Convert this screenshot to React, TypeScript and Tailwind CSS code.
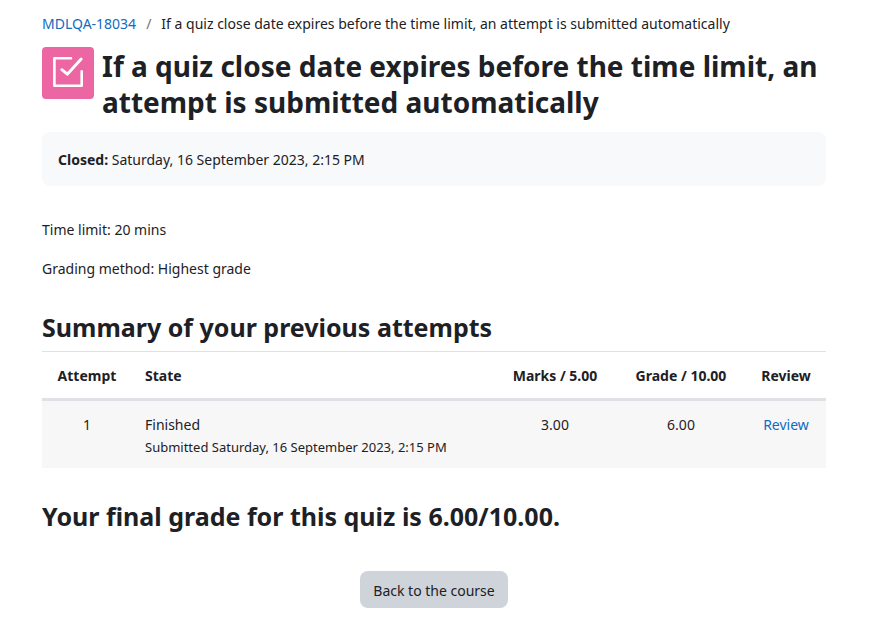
import React from "react";

const attempts = [
  {
    id: 1,
    state: "Finished",
    submitted: "Submitted Saturday, 16 September 2023, 2:15 PM",
    marks: "3.00",
    grade: "6.00",
  },
];

const QuizIcon: React.FC = () => {
  return (
    <svg viewBox="0 0 52 52" fill="none" stroke="white" strokeLinecap="round" strokeLinejoin="round" className="w-full h-full" aria-hidden="true">
      <path d="M29 11.3H12.4V38.7H39.7V24.2" strokeWidth="2.6" />
      <path d="M19.8 22.7L25.3 27.2L39.2 12" strokeWidth="2.9" />
    </svg>
  );
};

const App: React.FC = () => {
  return (
    <div className="min-h-screen bg-white pl-[42px] pr-[66px] pt-3 pb-2 font-['Noto_Sans',sans-serif] text-[14px] leading-[23px] text-[#1d2125]">
      <nav aria-label="Breadcrumb">
        <ol className="flex gap-2.5">
          <li>
            <a href="#course" className="text-[#0f6cbf] hover:underline">MDLQA-18034</a>
          </li>
          <li className="text-[#6a737b]" aria-hidden="true">/</li>
          <li>If a quiz close date expires before the time limit, an attempt is submitted automatically</li>
        </ol>
      </nav>

      <main>
        <header className="mt-3 flex items-start gap-2">
          <div className="size-[52px] shrink-0 rounded bg-[#eb66a2]">
            <QuizIcon />
          </div>
          <h1 className="pt-px text-[28px] leading-9 font-bold">
            If a quiz close date expires before the time limit, an attempt is submitted automatically
          </h1>
        </header>

        <div className="mt-3 rounded-lg bg-[#f8f9fa] px-4 pt-4 pb-[15px]">
          <strong className="font-bold">Closed:</strong> Saturday, 16 September 2023, 2:15 PM
        </div>

        <div className="mt-8 flex flex-col gap-4">
          <p>Time limit: 20 mins</p>
          <p>Grading method: Highest grade</p>
        </div>

        <h2 className="mt-[31px] text-[25px] leading-8 font-bold">Summary of your previous attempts</h2>

        <table className="mt-2 w-full border-collapse">
          <thead>
            <tr className="border-t border-b-3 border-t-[#dee2e6] border-b-[#dee2e6]">
              <th scope="col" className="w-[90px] pt-3 pb-[11px] text-center font-bold">Attempt</th>
              <th scope="col" className="px-[13px] pt-3 pb-[11px] text-left font-bold">State</th>
              <th scope="col" className="w-[122px] pt-3 pb-[11px] text-center font-bold">Marks / 5.00</th>
              <th scope="col" className="w-[130px] pt-3 pb-[11px] text-center font-bold">Grade / 10.00</th>
              <th scope="col" className="w-[80px] pt-3 pb-[11px] text-center font-bold">Review</th>
            </tr>
          </thead>
          <tbody>
            {attempts.map((item) => {
              return (
                <tr key={item.id} className="bg-[#f7f7f7] align-top">
                  <td className="py-3 text-center">{item.id}</td>
                  <td className="px-[13px] pt-3 pb-[9px]">
                    {item.state}
                    <span className="block text-[13px]">{item.submitted}</span>
                  </td>
                  <td className="py-3 text-center">{item.marks}</td>
                  <td className="py-3 text-center">{item.grade}</td>
                  <td className="py-3 text-center">
                    <a href="#review" className="text-[#0f6cbf] hover:underline">Review</a>
                  </td>
                </tr>
              );
            })}
          </tbody>
        </table>

        <h2 className="mt-8 text-[25px] leading-8 font-bold">Your final grade for this quiz is 6.00/10.00.</h2>

        <div className="mt-[39px] flex justify-center">
          <button type="button" className="rounded-lg bg-[#ced4da] px-[13px] pt-2 pb-1.5 hover:bg-[#b8bfc6]">
            Back to the course
          </button>
        </div>
      </main>
    </div>
  );
};

export default App;
